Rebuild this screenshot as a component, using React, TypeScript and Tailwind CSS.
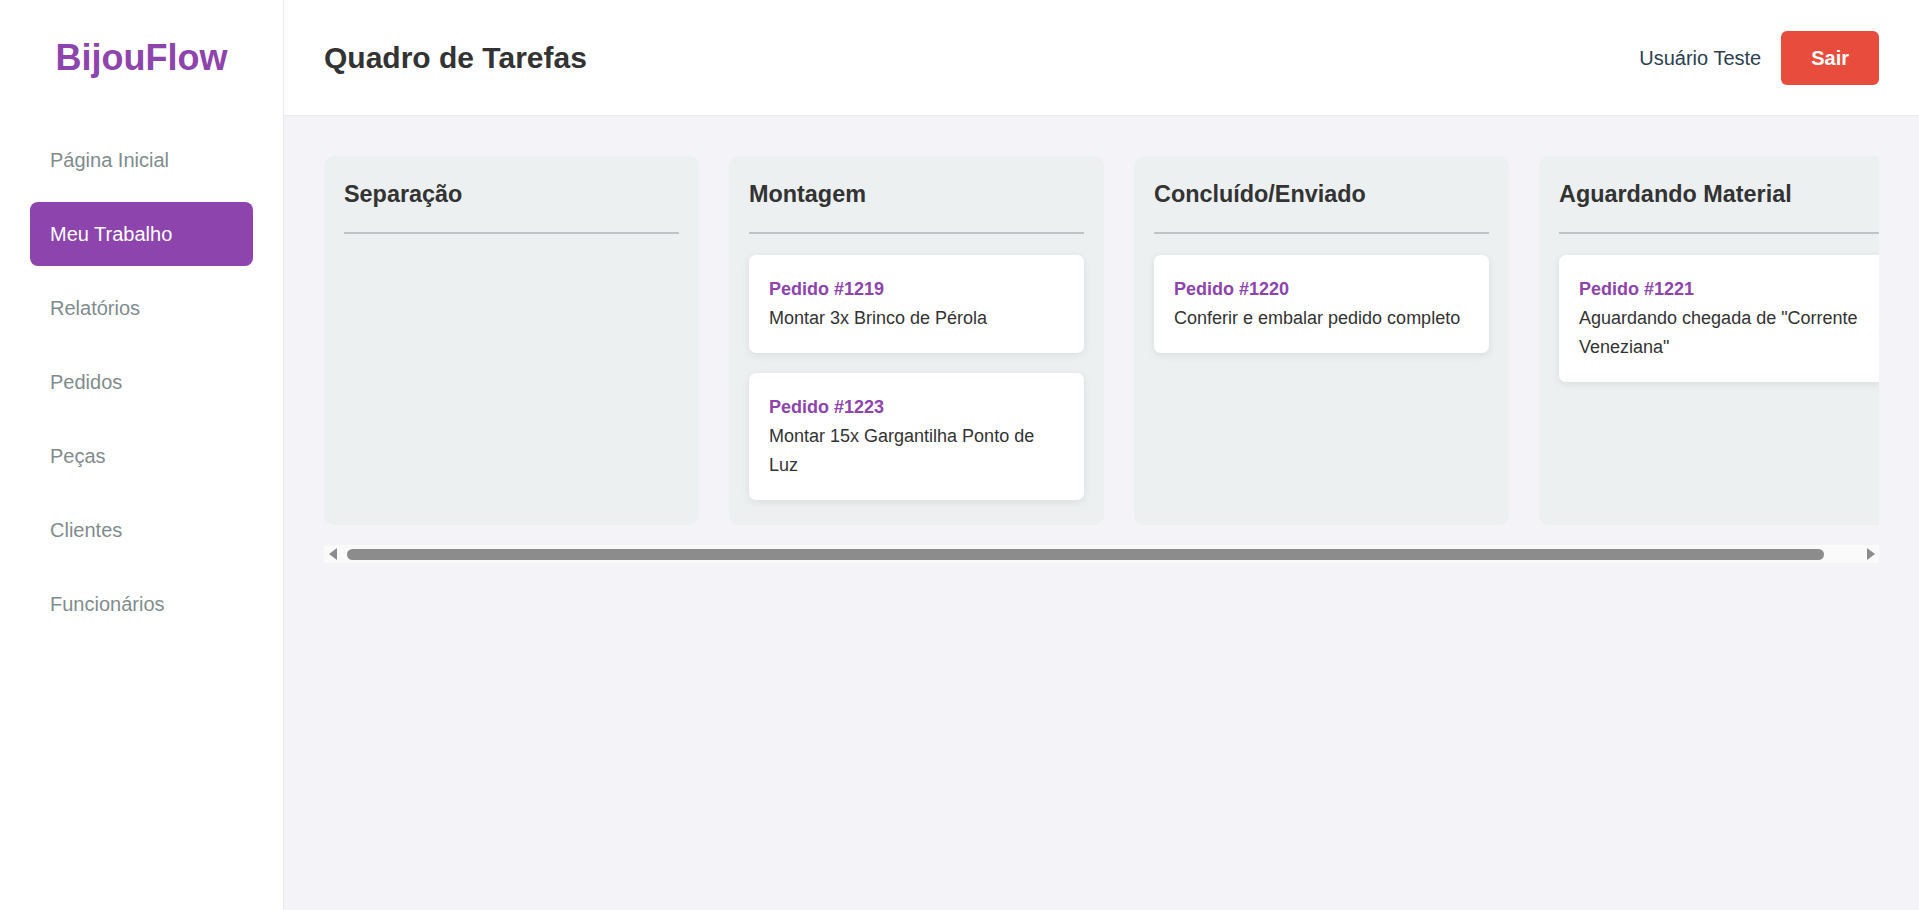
import * as React from "react";

type Task = { id: number; text: string };
type Column = { title: string; tasks: Task[] };

const navItems = ["Página Inicial", "Meu Trabalho", "Relatórios", "Pedidos", "Peças", "Clientes", "Funcionários"];

const columns: Column[] = [
    {title: "Separação", tasks: []},
    {
        title: "Montagem",
        tasks: [
            {id: 1219, text: "Montar 3x Brinco de Pérola"},
            {id: 1223, text: "Montar 15x Gargantilha Ponto de Luz"},
        ],
    },
    {title: "Concluído/Enviado", tasks: [{id: 1220, text: "Conferir e embalar pedido completo"}]},
    {title: "Aguardando Material", tasks: [{id: 1221, text: "Aguardando chegada de \"Corrente Veneziana\""}]},
];

/**
 * Left navigation with logo
 */
function Sidebar({active}: { active: string }) {
    return (
        <aside className="w-[284px] shrink-0 bg-white border-r border-[#e9e9ee] px-[30px]">
            <div className="h-[116px] flex items-center justify-center">
                <h1 className="text-[36px] font-bold text-[#8e44ad] leading-none">BijouFlow</h1>
            </div>
            <nav className="mt-[12px] flex flex-col gap-[10px]">
                {navItems.map(item => (
                    <a
                        key={item}
                        href="#"
                        className={`h-[64px] px-[20px] flex items-center rounded-[8px] text-[20px] ${item === active ? "bg-[#8e44ad] text-white" : "text-[#7f8c8d]"}`}
                    >
                        {item}
                    </a>
                ))}
            </nav>
        </aside>
    );
}

function TaskCard({task}: { task: Task }) {
    return (
        <div className="bg-white rounded-[7px] p-[20px] shadow-[0_2px_8px_rgba(0,0,0,0.08)]">
            <div className="text-[18px] leading-[29px] font-bold text-[#8e44ad]">Pedido #{task.id}</div>
            <div className="text-[18px] leading-[29px] text-[#333]">{task.text}</div>
        </div>
    );
}

function BoardColumn({column}: { column: Column }) {
    return (
        <div className="w-[375px] shrink-0 min-h-[369px] bg-[#ecf0f1] rounded-[10px] p-[20px]">
            <h3 className="mt-[5px] text-[23.4px] leading-[27px] font-bold text-[#333] pb-[24px] border-b-[2.5px] border-[#bdc3c7]">
                {column.title}
            </h3>
            <div className="mt-[21px] flex flex-col gap-[20px]">
                {column.tasks.map(task => <TaskCard key={task.id} task={task}/>)}
            </div>
        </div>
    );
}

/**
 * Horizontal scrollbar look-alike under the board
 */
function BoardScrollbar() {
    return (
        <div className="mt-[20px] h-[18px] bg-[#fafafa] flex items-center">
            <div className="w-[17px] h-full flex items-center justify-center">
                <div className="w-0 h-0 border-y-[6px] border-y-transparent border-r-[8px] border-r-[#8c8c8c]"/>
            </div>
            <div className="flex-1 ml-[6px] mr-[38px] h-[11px] rounded-full bg-[#8c8c8c]"/>
            <div className="w-[17px] h-full flex items-center justify-center">
                <div className="w-0 h-0 border-y-[6px] border-y-transparent border-l-[8px] border-l-[#8c8c8c]"/>
            </div>
        </div>
    );
}

export default function App() {
    return (
        <div className="flex h-screen w-full font-['Liberation_Sans',Arial,sans-serif] overflow-hidden">
            <Sidebar active="Meu Trabalho"/>
            <main className="flex-1 min-w-0 flex flex-col bg-[#f4f4f8]">
                <header className="h-[116px] shrink-0 bg-white border-b border-[#e9e9ee] px-[40px] flex items-center justify-between">
                    <h2 className="text-[30px] font-bold text-[#333]">Quadro de Tarefas</h2>
                    <div className="flex items-center gap-[20px]">
                        <span className="text-[20px] text-[#2c3e50]">Usuário Teste</span>
                        <button className="h-[54px] px-[30px] rounded-[6px] bg-[#e74c3c] text-white text-[20px] font-bold">
                            Sair
                        </button>
                    </div>
                </header>
                <section className="p-[40px]">
                    <div className="overflow-hidden">
                        <div className="flex gap-[30px] items-stretch">
                            {columns.map(col => <BoardColumn key={col.title} column={col}/>)}
                        </div>
                    </div>
                    <BoardScrollbar/>
                </section>
            </main>
        </div>
    );
}
